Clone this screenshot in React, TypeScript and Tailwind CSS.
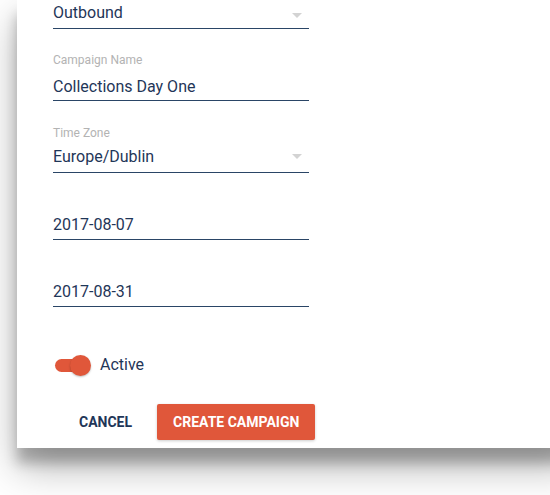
import React from "react";

const navy = "text-[#1f3658]";

function Arrow({ top }: { top: string }) {
  return (
    <svg
      className={`absolute right-[7px] ${top}`}
      width="10"
      height="5"
      viewBox="0 0 10 5"
    >
      <polygon points="0,0 10,0 5,5" fill="#d3d3d3" />
    </svg>
  );
}

export default function App() {
  return (
    <div
      className="w-[550px] h-[495px] overflow-hidden bg-white"
      style={{ fontFamily: "Roboto, 'Liberation Sans', sans-serif" }}
    >
      <div className="ml-[17px] w-[560px] bg-white shadow-[0_19px_38px_rgba(0,0,0,0.30),0_15px_12px_rgba(0,0,0,0.24)] pl-[36px] pb-[8px] flex flex-col">
        {/* Outbound select */}
        <div className={`relative w-[256px] pt-[1px] pb-[3px] border-b border-[#2a4566] text-[16px] leading-[24px] ${navy}`}>
          Outbound
          <Arrow top="top-[13px]" />
        </div>

        {/* Campaign Name */}
        <div className="mt-[23px] w-[256px]">
          <div className="text-[12px] leading-[16px] text-[#b3b3b3]">Campaign Name</div>
          <div className={`mt-[7px] pb-[1px] border-b border-[#2a4566] text-[16px] leading-[24px] ${navy}`}>
            Collections Day One
          </div>
        </div>

        {/* Time Zone */}
        <div className="mt-[24px] w-[256px]">
          <div className="text-[12px] leading-[16px] text-[#b3b3b3]">Time Zone</div>
          <div className={`relative mt-[4px] pb-[3px] border-b border-[#2a4566] text-[16px] leading-[24px] ${navy}`}>
            Europe/Dublin
            <Arrow top="top-[9px]" />
          </div>
        </div>

        {/* Dates */}
        <div className={`mt-[40px] w-[256px] pb-[2px] border-b border-[#2a4566] text-[16px] leading-[24px] ${navy}`}>
          2017-08-07
        </div>
        <div className={`mt-[40px] w-[256px] pb-[2px] border-b border-[#2a4566] text-[16px] leading-[24px] ${navy}`}>
          2017-08-31
        </div>

        {/* Toggle */}
        <div className="mt-[46px] h-[24px] flex items-center">
          <div className="relative ml-[2px] w-[36px] h-[21px] flex items-center">
            <div className="w-[34px] h-[13px] rounded-full bg-[#e0573a]" />
            <div className="absolute right-0 top-0 w-[21px] h-[21px] rounded-full bg-[#e0573a] shadow-[0_1px_2px_rgba(0,0,0,0.25)]" />
          </div>
          <span className={`ml-[9px] text-[16px] leading-[24px] ${navy}`}>Active</span>
        </div>

        {/* Buttons */}
        <div className="mt-[27px] flex items-center">
          <button className={`ml-[10px] h-[36px] px-4 text-[14px] font-bold uppercase ${navy}`}>
            Cancel
          </button>
          <button className="ml-[9px] h-[36px] px-4 rounded-[2px] bg-[#e0573a] text-white text-[14px] font-bold uppercase shadow-[0_1px_3px_rgba(0,0,0,0.2)]">
            Create Campaign
          </button>
        </div>
      </div>
    </div>
  );
}
